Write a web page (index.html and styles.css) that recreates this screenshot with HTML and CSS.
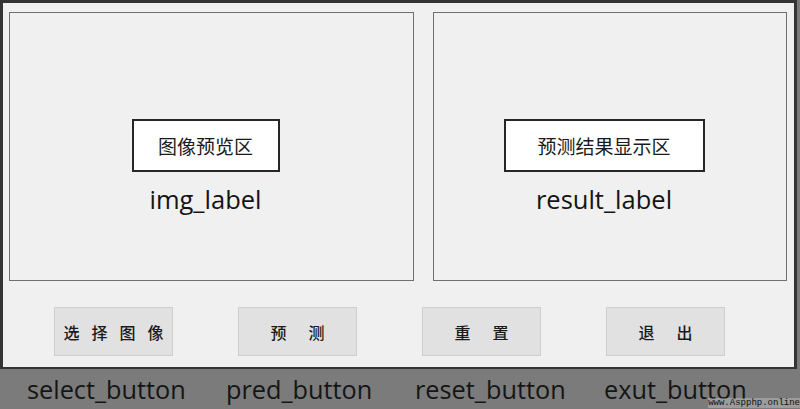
FILE: index.html
```html
<!DOCTYPE html>
<html lang="zh-CN">
<head>
  <meta charset="UTF-8" />
  <meta name="viewport" content="width=device-width, initial-scale=1.0"/>
  <title>图像预测</title>
  <link rel="stylesheet" href="styles.css">
</head>
<body>
  <div class="window">
    <div class="panels">
      <div class="panel">
        <div class="caption caption-img">图像预览区</div>
        <div class="name">img_label</div>
      </div>
      <div class="panel">
        <div class="caption caption-result">预测结果显示区</div>
        <div class="name">result_label</div>
      </div>
    </div>

    <div class="buttons">
      <button class="btn btn-four"><span>选择图像</span></button>
      <button class="btn btn-two"><span>预测</span></button>
      <button class="btn btn-two"><span>重置</span></button>
      <button class="btn btn-two"><span>退出</span></button>
    </div>
  </div>

  <div class="names">
    <span>select_button</span>
    <span>pred_button</span>
    <span>reset_button</span>
    <span>exut_button</span>
  </div>

  <div class="watermark">www.Aspphp.online</div>
</body>
</html>
```

FILE: styles.css
```css
body {
  margin: 0;
  width: 800px;
  height: 409px;
  overflow: hidden;
  position: relative;
  background: #7b7b7b;
  font-family: 'Open Sans', 'Noto Sans CJK SC', sans-serif;
}

.window {
  box-sizing: border-box;
  width: 797px;
  height: 369px;
  padding: 9px 0 0 6px;
  background: #f0f0f0;
  border: 3px solid #343434;
  border-bottom-width: 2px;
}

.panels {
  display: grid;
  grid-template-columns: 405px 354px;
  column-gap: 19px;
  height: 269px;
}

.panel {
  display: flex;
  flex-direction: column;
  align-items: center;
  padding: 106px 12px 0 0;
  border: 1px solid #6f6f6f;
}

.caption {
  box-sizing: border-box;
  height: 53px;
  line-height: 49px;
  text-align: center;
  background: #fff;
  border: 2px solid #262626;
  font-family: 'Noto Sans CJK SC', sans-serif;
  font-size: 19px;
  color: #1a1a1a;
}

.caption-img {
  width: 148px;
}

.caption-result {
  width: 201px;
}

.name {
  margin-top: 10px;
  font-size: 25.5px;
  color: #141414;
}

.buttons {
  display: flex;
  gap: 65px;
  margin-top: 26px;
  padding-left: 45px;
}

.btn {
  width: 119px;
  height: 49px;
  padding: 0;
  white-space: nowrap;
  background: #e1e1e1;
  border: 1px solid #cfcfcf;
  font-family: 'Noto Sans CJK SC', sans-serif;
  font-size: 16px;
  font-weight: 500;
  color: #1a1a1a;
}

.btn-four span {
  letter-spacing: 12px;
  margin-right: -12px;
}

.btn-two span {
  letter-spacing: 22px;
  margin-right: -22px;
}

.names {
  display: grid;
  grid-template-columns: 199px 189px 189px auto;
  padding-left: 27px;
  height: 40px;
  line-height: 40px;
  font-size: 25.3px;
  color: #151515;
}

.watermark {
  position: absolute;
  right: 0;
  bottom: 1px;
  font-family: 'Liberation Mono', monospace;
  font-size: 9px;
  line-height: 10px;
  color: #111;
  background: rgba(255, 255, 255, 0.25);
}
```
